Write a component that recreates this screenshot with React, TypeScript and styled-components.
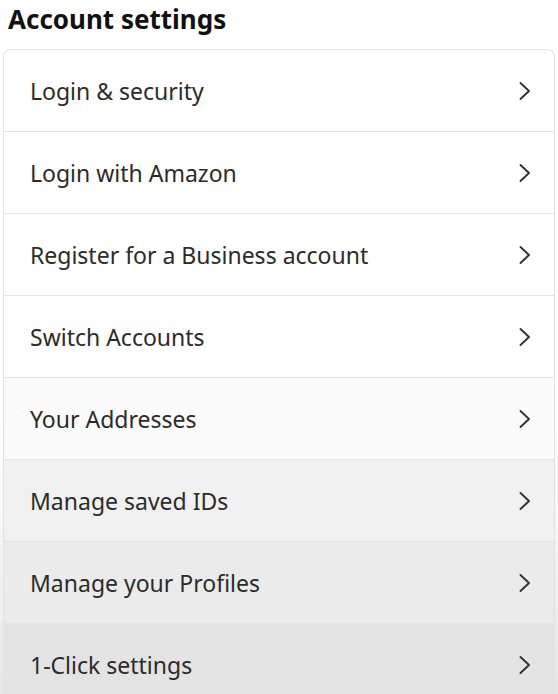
import React from "react";
import styled, { createGlobalStyle } from "styled-components";

const GlobalStyle = createGlobalStyle`
  html, body {
    margin: 0;
    padding: 0;
    background: #ffffff;
  }
  body {
    font-family: "Noto Sans", "Open Sans", Arial, sans-serif;
    color: #111;
  }
`;

type Item = {
  label: string;
  shade: string;
};

const items: Item[] = [
  { label: "Login & security", shade: "#ffffff" },
  { label: "Login with Amazon", shade: "#ffffff" },
  { label: "Register for a Business account", shade: "#ffffff" },
  { label: "Switch Accounts", shade: "#fefefe" },
  { label: "Your Addresses", shade: "#fbfbfb" },
  { label: "Manage saved IDs", shade: "#f1f1f1" },
  { label: "Manage your Profiles", shade: "#ebebeb" },
  { label: "1-Click settings", shade: "#e3e3e3" },
];

const Chevron = () => (
  <ChevronIcon viewBox="0 0 14 20" fill="none">
    <path
      d="M2.5 2 L11 10 L2.5 18"
      stroke="#333"
      strokeWidth="1.9"
      strokeLinecap="round"
      strokeLinejoin="round"
    />
  </ChevronIcon>
);

const App = () => {
  return (
    <Page>
      <GlobalStyle />
      <Title>Account settings</Title>
      <Card>
        {items.map((item) => (
          <Row key={item.label} shade={item.shade}>
            <Label>{item.label}</Label>
            <Chevron />
          </Row>
        ))}
      </Card>
    </Page>
  );
};

export default App;

const Page = styled.div`
  width: 558px;
  height: 694px;
  overflow: hidden;
  background: linear-gradient(#ffffff 0%, #ffffff 60%, #e6e6e6 100%);
`;

const Title = styled.h1`
  margin: 0;
  padding: 1px 0 0 8px;
  height: 46px;
  box-sizing: border-box;
  font-size: 26px;
  line-height: 36px;
  font-weight: 700;
  color: #111;
`;

const Card = styled.div`
  margin: 3px 3px 0 3px;
  border: 1px solid #e2e2e2;
  border-bottom: none;
  border-radius: 8px 8px 0 0;
  overflow: hidden;
`;

const Row = styled.div<{ shade: string }>`
  display: flex;
  align-items: center;
  justify-content: space-between;
  height: 81px;
  padding: 0 22px 0 26px;
  background: ${({ shade }) => shade};
  border-bottom: 1px solid #e4e4e4;
`;

const Label = styled.span`
  font-size: 23px;
  line-height: 30px;
  color: #2b2b2b;
`;

const ChevronIcon = styled.svg`
  width: 14px;
  height: 20px;
`;
